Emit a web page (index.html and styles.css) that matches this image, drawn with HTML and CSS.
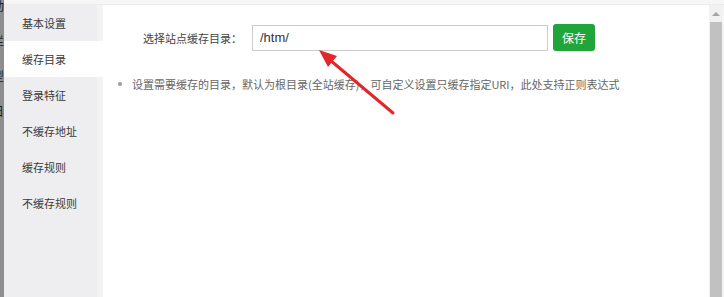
FILE: index.html
```html
<!DOCTYPE html>
<html lang="zh-CN">
<head>
<meta charset="utf-8">
<title>缓存目录</title>
<link rel="stylesheet" href="styles.css">
</head>
<body>
<div class="screen">
  <div class="backdrop">
    <div class="backdrop-chars">
      <span>动</span><span>栏</span><span>型</span><span>日</span>
    </div>
  </div>
  <div class="modal">
    <div class="modal-top"></div>
    <div class="modal-body">
      <nav class="side">
        <div class="side-item">基本设置</div>
        <div class="side-item active">缓存目录</div>
        <div class="side-item">登录特征</div>
        <div class="side-item">不缓存地址</div>
        <div class="side-item">缓存规则</div>
        <div class="side-item">不缓存规则</div>
      </nav>
      <main class="content">
        <div class="form-row">
          <label class="form-label">选择站点缓存目录：</label>
          <input class="dir-input" type="text" value="/htm/">
          <button class="save-btn">保存</button>
        </div>
        <ul class="tips">
          <li>设置需要缓存的目录，默认为根目录(全站缓存)，可自定义设置只缓存指定URI，此处支持正则表达式</li>
        </ul>
      </main>
      <div class="scrollbar">
        <div class="sb-up"><span class="sb-tri"></span></div>
        <div class="sb-thumb"></div>
      </div>
      <div class="edge"></div>
    </div>
  </div>
  <svg class="arrow" width="724" height="297" viewBox="0 0 724 297">
    <line x1="393" y1="113" x2="330" y2="60" stroke="#e3262b" stroke-width="3" stroke-linecap="round"/>
    <polygon points="319,50 337,56 328,67" fill="#e3262b"/>
  </svg>
</div>
</body>
</html>
```

FILE: styles.css
```css
html, body {
  margin: 0;
  padding: 0;
  background: #ffffff;
}

.screen {
  position: relative;
  width: 724px;
  height: 297px;
  display: flex;
  overflow: hidden;
  font-family: "Noto Sans CJK SC", "Noto Sans", sans-serif;
}

.backdrop {
  width: 4px;
  flex: none;
  background: #8e8e8e;
  overflow: hidden;
}

.backdrop-chars {
  width: 12px;
  margin-left: -8px;
  display: flex;
  flex-direction: column;
  font-size: 12px;
  line-height: 12px;
  color: #1e1e1e;
  gap: 23px;
}

.modal {
  flex: 1;
  display: flex;
  flex-direction: column;
  min-width: 0;
}

.modal-top {
  height: 5px;
  flex: none;
  background: #f6f6f6;
  border-bottom: 1px solid #ececec;
  box-sizing: border-box;
}

.modal-body {
  flex: 1;
  display: flex;
  min-height: 0;
}

.side {
  width: 99px;
  flex: none;
  background: #eeeef0;
  box-shadow: inset -6px 0 0 #f3f3f4;
  display: flex;
  flex-direction: column;
}

.side-item {
  height: 36px;
  line-height: 36px;
  padding-left: 18px;
  font-size: 11px;
  color: #3a3a3a;
  white-space: nowrap;
}

.side-item.active {
  background: #ffffff;
}

.content {
  flex: 1;
  min-width: 0;
  padding: 19px 0 0 40px;
  box-sizing: border-box;
}

.form-row {
  display: flex;
  align-items: center;
}

.form-label {
  width: 109px;
  flex: none;
  font-size: 11px;
  color: #444444;
  white-space: nowrap;
}

.dir-input {
  width: 296px;
  height: 26px;
  box-sizing: border-box;
  border: 1px solid #cccccc;
  padding: 0 7px;
  margin: 0;
  font-family: "Liberation Sans", Arial, sans-serif;
  font-size: 13px;
  color: #333333;
  outline: none;
}

.save-btn {
  margin-left: 5px;
  width: 42px;
  height: 27px;
  border: none;
  border-radius: 3px;
  background: #20a53a;
  color: #ffffff;
  font-family: "Noto Sans CJK SC", sans-serif;
  font-size: 12px;
  padding: 0;
}

.tips {
  list-style: none;
  margin: 25px 0 0 -25px;
  padding: 0;
}

.tips li {
  display: flex;
  align-items: center;
  font-size: 11px;
  line-height: 16px;
  color: #666666;
  white-space: nowrap;
}

.tips li::before {
  content: "";
  width: 4px;
  height: 4px;
  border-radius: 50%;
  background: #999999;
  margin-right: 10px;
  flex: none;
}

.scrollbar {
  width: 13px;
  flex: none;
  background: #f1f1f1;
  display: flex;
  flex-direction: column;
}

.sb-up {
  height: 17px;
  flex: none;
  display: flex;
  align-items: center;
  justify-content: center;
}

.sb-tri {
  width: 0;
  height: 0;
  border-left: 4px solid transparent;
  border-right: 4px solid transparent;
  border-bottom: 4px solid #a3a3a3;
}

.sb-thumb {
  flex: 1;
  margin-left: 1px;
  background: #c1c1c1;
}

.edge {
  width: 2px;
  flex: none;
  background: #f4f4f4;
}

.arrow {
  position: absolute;
  left: 0;
  top: 0;
  pointer-events: none;
}
```
